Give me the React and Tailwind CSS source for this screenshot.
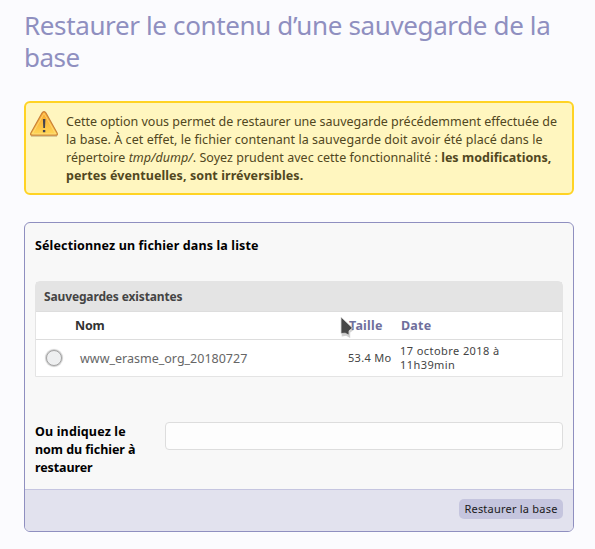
function WarningIcon() {
  return (
    <svg className="ml-[3px] mt-[7px] h-[28px] w-[30px] shrink-0" viewBox="0 0 30 28">
      <defs>
        <linearGradient id="amber" x1="0" y1="0" x2="0" y2="1">
          <stop offset="0" stopColor="#f9a52c" />
          <stop offset="0.6" stopColor="#fcc244" />
          <stop offset="1" stopColor="#ffd95a" />
        </linearGradient>
      </defs>
      <path d="M2 26.2H28" stroke="#b9a878" strokeWidth="1.4" opacity="0.6" />
      <path d="M15 1.7c.9 0 1.5.5 2 1.3l11.1 20c.7 1.3.2 2.2-1.2 2.2H3.1c-1.4 0-1.900-.9-1.200-2.200L13 3c.5-.8 1.100-1.300 2-1.300z" fill="url(#amber)" stroke="#c98038" strokeWidth="1.2" strokeLinejoin="round" />
      <path d="M15 3.300L3.400 23.900h23.200z" fill="none" stroke="#ffe08a" strokeWidth="0.8" strokeLinejoin="round" opacity="0.8" />
      <path d="M13.900 9h2.500l-.4 9h-1.700zM13.900 20h2.400v2.300h-2.400z" fill="#43434f" />
    </svg>
  );
}

function Pointer() {
  return (
    <svg className="absolute left-[304px] top-[4px] h-[22px] w-[15px] overflow-visible" viewBox="0 0 15 22">
      <path d="M1 1v18.500l4.500-.8 4 2.300v-5.500l3.500-2.500z" fill="#777" opacity="0.35" transform="translate(.7 1)" />
      <path d="M1 1v16.500l4.200-.3 3.800 2v-4.400l3.500-2.800z" fill="#484848" stroke="#ddd" strokeWidth="0.8" />
    </svg>
  );
}

export default function App() {
  return (
    <main className="h-[549px] w-[595px] overflow-hidden bg-[#fbfbfe] pl-6 pr-[21px] pt-[9px] font-['Noto_Sans','Open_Sans',sans-serif] text-[12.5px] leading-[18px]">
      <h1 className="h-[92px] whitespace-nowrap text-[26px] leading-8 text-[#8f8fc0]">
        <span className="block tracking-[-0.37px]">Restaurer le contenu d’une sauvegarde de la</span>
        <span className="block tracking-[-0.5px]">base</span>
      </h1>

      <section className="flex h-[94px] rounded-md border-2 border-[#ffd324] bg-[#fff6bf] text-[#514721]">
        <WarningIcon />
        <p className="ml-[7px] mt-[10px] whitespace-nowrap">
          <span className="block tracking-[-0.02px]">Cette option vous permet de restaurer une sauvegarde précédemment effectuée de</span>
          <span className="block tracking-[0.05px]">la base. À cet effet, le fichier contenant la sauvegarde doit avoir été placé dans le</span>
          <span className="block tracking-[0.025px]">répertoire <i>tmp/dump/</i>. Soyez prudent avec cette fonctionnalité : <b>les modifications,</b></span>
          <b className="block tracking-[0.08px]">pertes éventuelles, sont irréversibles.</b>
        </p>
      </section>

      <form className="mt-[27px] flex h-[310px] flex-col overflow-hidden rounded-md border border-[#8f8fc0] bg-[#f8f8f8]">
        <div className="flex-1 px-[10px] pt-[14px]">
          <h2 className="font-bold tracking-[0.13px] text-black">Sélectionnez un fichier dans la liste</h2>

          <div className="relative mt-[26px] h-24 rounded-t-[5px] border border-[#e4e4e4] bg-white">
            <div className="h-[29px] bg-[#e4e4e4] pl-2 text-[12px] font-bold leading-[29px] tracking-[-0.14px] text-[#444]">Sauvegardes existantes</div>
            <div className="relative flex h-[29px] border-y border-[#ddd] font-bold leading-[27px] text-[#6f6f9c]">
              <span className="w-[274px] pl-[39px] tracking-[-0.2px] text-[#333]">Nom</span>
              <span className="ml-[39px] w-[52px] tracking-[0.2px]">Taille</span>
              <span className="tracking-[0.2px]">Date</span>
              <Pointer />
            </div>
            <div className="flex h-9 items-center text-[#444]">
              <span className="ml-[10px] h-4 w-4 rounded-full border border-[#a4a4a4] bg-[#eeeff0] shadow-[0_0_1px_1px_#ccc]" />
              <span className="ml-[18px] w-[268px] whitespace-nowrap pt-px text-[#666]">www_erasme_org_20180727</span>
              <span className="w-[52px] whitespace-nowrap text-[11px] tracking-[0.3px]">53.4 Mo</span>
              <span className="whitespace-nowrap text-[11px] leading-[14px] tracking-[0.43px]">17 octobre 2018 à<br />11h39min</span>
            </div>
          </div>

          <div className="mt-[45px] flex">
            <label className="w-[130px] whitespace-nowrap pt-px font-bold text-black"><span className="tracking-[0.15px]">Ou indiquez le</span><br /><span className="tracking-[-0.05px]">nom du fichier à</span><br /><span className="tracking-[-0.1px]">restaurer</span></label>
            <input className="h-7 w-[398px] rounded border border-[#ddd] bg-[#fdfdfd] px-2" aria-label="Nom du fichier" />
          </div>
        </div>

        <footer className="flex h-[42px] justify-end border-t border-[#c5c5e0] bg-[#e2e2ee] pr-[10px] pt-[9px]">
          <button type="button" className="h-5 w-[104px] whitespace-nowrap rounded-[5px] bg-[#c5c5de] text-[11px] leading-5 tracking-[0.22px] text-[#1a1a1a]">Restaurer la base</button>
        </footer>
      </form>
    </main>
  );
}
